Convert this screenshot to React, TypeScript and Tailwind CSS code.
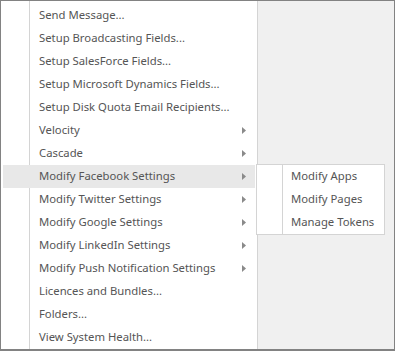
import React from "react";

interface Item {
  label: string;
  sub?: boolean;
  active?: boolean;
}

const items: Item[] = [
  { label: "Send Message..." },
  { label: "Setup Broadcasting Fields..." },
  { label: "Setup SalesForce Fields..." },
  { label: "Setup Microsoft Dynamics Fields..." },
  { label: "Setup Disk Quota Email Recipients..." },
  { label: "Velocity", sub: true },
  { label: "Cascade", sub: true },
  { label: "Modify Facebook Settings", sub: true, active: true },
  { label: "Modify Twitter Settings", sub: true },
  { label: "Modify Google Settings", sub: true },
  { label: "Modify LinkedIn Settings", sub: true },
  { label: "Modify Push Notification Settings", sub: true },
  { label: "Licences and Bundles..." },
  { label: "Folders..." },
  { label: "View System Health..." },
];

const subItems = ["Modify Apps", "Modify Pages", "Manage Tokens"];

function Arrow() {
  return (
    <svg width="4" height="7" viewBox="0 0 4 7" className="ml-auto">
      <polygon points="0,0 4,3.5 0,7" fill="#8a8a8a" />
    </svg>
  );
}

export default function App() {
  return (
    <div
      className="relative w-[395px] h-[351px] bg-[#f0f0f0] border border-[#828282] border-b-2 flex text-[11.3px] text-[#555]"
      style={{ fontFamily: '"Noto Sans", "Open Sans", sans-serif' }}
    >
      <div className="w-[257px] h-[348px] bg-white border-r border-[#d4d4d4] pt-[3px] flex flex-col bg-[linear-gradient(to_right,transparent_28px,#d4d4d4_28px,#d4d4d4_29px,transparent_29px)]">
        {items.map((it) => (
          <div
            key={it.label}
            className={
              "h-[23px] shrink-0 flex items-center pl-[36px] pr-[9px] mx-[2px] " +
              (it.active ? "bg-[#e8e8e8]" : "")
            }
          >
            <span>{it.label}</span>
            {it.sub && <Arrow />}
          </div>
        ))}
      </div>
      <div className="absolute left-[255px] top-[163px] w-[129px] bg-white border border-[#d4d4d4] flex flex-col bg-[linear-gradient(to_right,transparent_25px,#d4d4d4_25px,#d4d4d4_26px,transparent_26px)]">
        {subItems.map((s) => (
          <div key={s} className="h-[23px] flex items-center pl-[34px]">
            {s}
          </div>
        ))}
      </div>
    </div>
  );
}
